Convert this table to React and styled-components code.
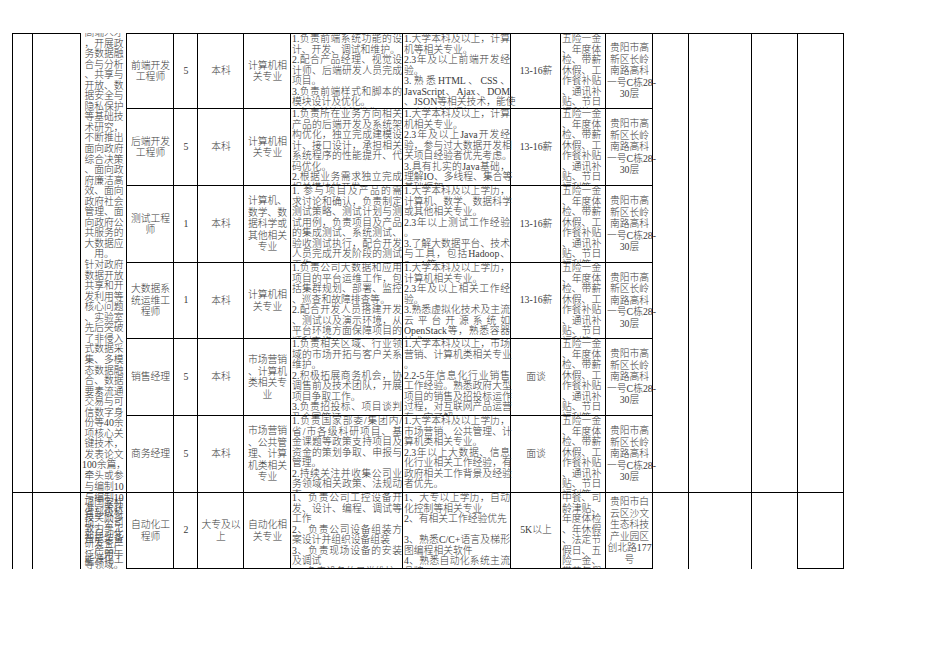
import React from 'react';
import styled, { createGlobalStyle } from 'styled-components';

const GlobalStyle = createGlobalStyle`
  html, body { margin: 0; padding: 0; background: #fff; }
  body { font-family: "Liberation Serif", "Noto Sans CJK SC", serif; }
`;

const COLS = [20, 48, 46, 47, 24, 46, 47, 112, 108, 50, 45, 47, 36, 63, 46, 46];
const ROWS = [76, 77, 77, 76, 77, 77, 76];

const Page = styled.div`
  width: 936px;
  height: 662px;
  padding: 33px 0 0 12px;
  box-sizing: border-box;
  overflow: hidden;
  background: #fff;
`;

const Sheet = styled.div`
  display: grid;
  grid-template-columns: ${COLS.map(c => c + 'px').join(' ')};
  grid-template-rows: ${ROWS.map(r => r + 'px').join(' ')};
  width: max-content;
  border-left: 1px solid #000;
  font-size: 9.8px;
  font-weight: 300;
  color: #3a3a3a;
`;

const Cell = styled.div`
  grid-row: span ${p => p.$rows || 1};
  box-sizing: border-box;
  border-right: 1px solid #000;
  border-bottom: ${p => (p.$open ? 'none' : '1px solid #000')};
  border-top: ${p => (p.$top ? '1px solid #000' : 'none')};
  padding: 0 0 0 1px;
  min-width: 0;
  min-height: 0;
  overflow-x: visible;
  overflow-y: clip;
  display: flex;
  flex-direction: column;
  justify-content: ${p => (p.$v === 'top' ? 'flex-start' : 'center')};
`;

const Stack = styled.div`
  flex-shrink: 0;
  margin-top: ${p => p.$shift || 0}px;
`;

const Line = styled.div`
  height: ${p => p.$lh}px;
  line-height: ${p => p.$lh}px;
  white-space: nowrap;
  text-align: ${p => p.$align};
  text-align-last: ${p => (p.$justify ? 'justify' : p.$align)};
`;

const isEnd = (lines, i) =>
  i === lines.length - 1 || lines[i + 1] === '' || /^\d[.、]/.test(lines[i + 1]);

const Text = ({ lines, align = 'left', lh = 10.5, justify = false, shift = 0 }) => (
  <Stack $shift={shift}>
    {lines.map((t, i) => (
      <Line key={i} $lh={lh} $align={align} $justify={justify && t !== '' && !isEnd(lines, i)}>
        {t || '\u00a0'}
      </Line>
    ))}
  </Stack>
);

const DESC = [
  '高端人才', '，开展政', '务数据融', '合与分析', '、共享与', '开放、数', '据安全与', '隐私保护',
  '等基础技', '术研究，', '不断推出', '面向政府', '综合决策', '、面向政', '府廉洁高', '效、面向',
  '政府社会', '管理、面', '向政府公', '共服务的', '大数据应', '用。', '针对政府', '数据开放',
  '共享和开', '发利用等', '核心问题', '、实验室', '先后突破', '了非侵入', '式数据采', '集、多模',
  '态数据融', '合、数据', '要素流通', '交易与可', '信数字身', '份等40余', '项核心关', '键技术，',
  '发表论文', '100余篇，', '牵头或参', '与编制10',
];

const DESC7 = [
  '与编制10', '项国家标', '准，荣获', '省部级科', '技奖励多', '项。公司', '致力于工',
  '业自动化', '智能装备', '研发生产', '，产品广', '泛应用于', '能源化工', '等领域。',
];

const BEN = ['五险一金', '、年度体', '检、带薪', '休假、工', '作餐补贴', '、通讯补', '贴、节日', '福利等'];
const ADDR = ['贵阳市高', '新区长岭', '南路高科', '一号C栋28-', '30层'];

const JOBS = [
  {
    title: ['前端开发', '工程师'], n: '5', edu: ['本科'], major: ['计算机相', '关专业'],
    duty: ['1.负责前端系统功能的设', '计、开发、调试和维护。', '2.配合产品经理、视觉设', '计师、后端研发人员完成', '项目。', '3.负责前端样式和脚本的', '模块设计及优化。', '4.负责前端性能优化。'],
    req: ['1.大学本科及以上，计算', '机等相关专业。', '2.3年及以上前端开发经', '验。', '3.熟悉HTML、CSS、', 'JavaScript、Ajax、DOM', '、JSON等相关技术，能使', '用主流前端框架。'],
    pay: '13-16薪', ben: BEN, addr: ADDR,
  },
  {
    title: ['后端开发', '工程师'], n: '5', edu: ['本科'], major: ['计算机相', '关专业'],
    duty: ['1.负责所在业务方向相关', '产品的后端开发及系统架', '构优化，独立完成建模设', '计、接口设计，承担相关', '系统程序的性能提升、代', '码优化。', '2.根据业务需求独立完成', '相关模块的开发。'],
    req: ['1.大学本科及以上，计算', '机相关专业。', '2.3年及以上Java开发经', '验，参与过大数据开发相', '关项目经验者优先考虑。', '3.具有扎实的Java基础，', '理解IO、多线程、集合等', '基础框架。'],
    pay: '13-16薪', ben: BEN, addr: ADDR,
  },
  {
    title: ['测试工程', '师'], n: '1', edu: ['本科'], major: ['计算机、', '数学、数', '据科学或', '其他相关', '专业'],
    duty: ['1. 参与项目及产品的需', '求讨论和确认，负责制定', '测试策略、测试计划与测', '试用例，负责项目及产品', '的集成测试、系统测试、', '验收测试执行，配合开发', '人员完成开发阶段的测试', '工作。'],
    req: ['1.大学本科及以上学历，', '计算机、数学、数据科学', '或其他相关专业。', '2.3年以上测试工作经验', '。', '3.了解大数据平台、技术', '与工具，包括Hadoop、', 'Spark等。'],
    pay: '13-16薪', ben: BEN, addr: ADDR,
  },
  {
    title: ['大数据系', '统运维工', '程师'], n: '1', edu: ['本科'], major: ['计算机相', '关专业'],
    duty: ['1.负责公司大数据和应用', '项目的平台运维工作，包', '括集群规划、部署、监控', '、巡查和故障排查等。', '2.配合开发人员搭建开发', '、测试以及演示环境，从', '平台环境方面保障项目的', '顺利实施。'],
    req: ['1.大学本科及以上学历，', '计算机相关专业。', '2.3年及以上相关工作经', '验。', '3.熟悉虚拟化技术及主流', '云平台开源系统如', 'OpenStack等，熟悉容器', '技术。'],
    pay: '13-16薪', ben: BEN, addr: ADDR,
  },
  {
    title: ['销售经理'], n: '5', edu: ['本科'], major: ['市场营销', '、计算机', '类相关专', '业'],
    duty: ['1.负责相关区域、行业领', '域的市场开拓与客户关系', '维护。', '2.积极拓展商务机会，协', '调售前及技术团队，开展', '项目争取工作。', '3.负责招投标、项目谈判', '及合同签订。'],
    req: ['1.大学本科及以上，市场', '营销、计算机类相关专业', '。', '2.2-5年信息化行业销售', '工作经验。熟悉政府大型', '项目的销售及招投标运作', '过程，对互联网产品运营', '有一定了解。'],
    pay: '面谈', ben: BEN, addr: ADDR,
  },
  {
    title: ['商务经理'], n: '5', edu: ['本科'], major: ['市场营销', '、公共管', '理、计算', '机类相关', '专业'],
    duty: ['1.负责国家部委/集团内/', '省/市各级科研项目、基', '金课题等政策支持项目及', '资金的策划争取、申报与', '管理。', '2.持续关注并收集公司业', '务领域相关政策、法规动', '态。'],
    req: ['1.大学本科及以上学历，', '市场营销、公共管理、计', '算机类相关专业。', '2.3年以上大数据、信息', '化行业相关工作经验，有', '政府相关工作背景及经验', '者优先。'],
    pay: '面谈', ben: BEN, addr: ADDR,
  },
];

const JOB7 = {
  title: ['自动化工', '程师'], n: '2', edu: ['大专及以', '上'], major: ['自动化相', '关专业'],
  duty: ['1、负责公司工控设备开', '发、设计、编程、调试等', '工作', '2、负责公司设备组装方', '案设计并组织设备组装', '3、负责现场设备的安装', '及调试', '4、负责设备的日常维护'],
  req: ['1、大专以上学历，自动', '化控制等相关专业', '2、有相关工作经验优先', '', '3、熟悉C/C+语言及梯形', '图编程相关软件', '4、熟悉自动化系统主流', '品牌PLC。'],
  pay: '5K以上',
  ben: ['中餐、司', '龄津贴、', '年度体检', '、年休假', '、法定节', '假日、五', '险一金、', '带薪年假'],
  addr: ['贵阳市白', '云区沙文', '生态科技', '产业园区', '创北路177', '号'],
};

const JobCells = ({ job, top }) => (
  <>
    <Cell $top={top}><Text lines={job.title} align="center" lh={11.5} /></Cell>
    <Cell $top={top}><Text lines={[job.n]} align="center" /></Cell>
    <Cell $top={top}><Text lines={job.edu} align="center" lh={11.5} /></Cell>
    <Cell $top={top}><Text lines={job.major} align="center" lh={11.5} /></Cell>
    <Cell $top={top} $v="top"><Text lines={job.duty} justify /></Cell>
    <Cell $top={top} $v="top"><Text lines={job.req} justify /></Cell>
    <Cell $top={top}><Text lines={[job.pay]} align="center" /></Cell>
    <Cell $top={top} $v="top"><Text lines={job.ben} /></Cell>
    <Cell $top={top}><Text lines={job.addr} align="center" lh={11.5} /></Cell>
  </>
);

export default function App() {
  return (
    <Page>
      <GlobalStyle />
      <Sheet>
        <Cell $top $rows={6} />
        <Cell $top $rows={6} />
        <Cell $rows={6} $v="top">
          <Text lines={DESC} align="center" lh={10.55} shift={-5} />
        </Cell>
        <JobCells job={JOBS[0]} top />
        <Cell $top $rows={6} />
        <Cell $top $rows={6} />
        <Cell $top $rows={6} />
        <Cell $top $rows={6} />
        {JOBS.slice(1).map((job, i) => (
          <JobCells key={i} job={job} />
        ))}
        <Cell $open />
        <Cell $open />
        <Cell $open>
          <Text lines={DESC7} align="center" lh={5.2} />
        </Cell>
        <JobCells job={JOB7} />
        <Cell $open />
        <Cell $open />
        <Cell $open />
        <Cell />
      </Sheet>
    </Page>
  );
}
